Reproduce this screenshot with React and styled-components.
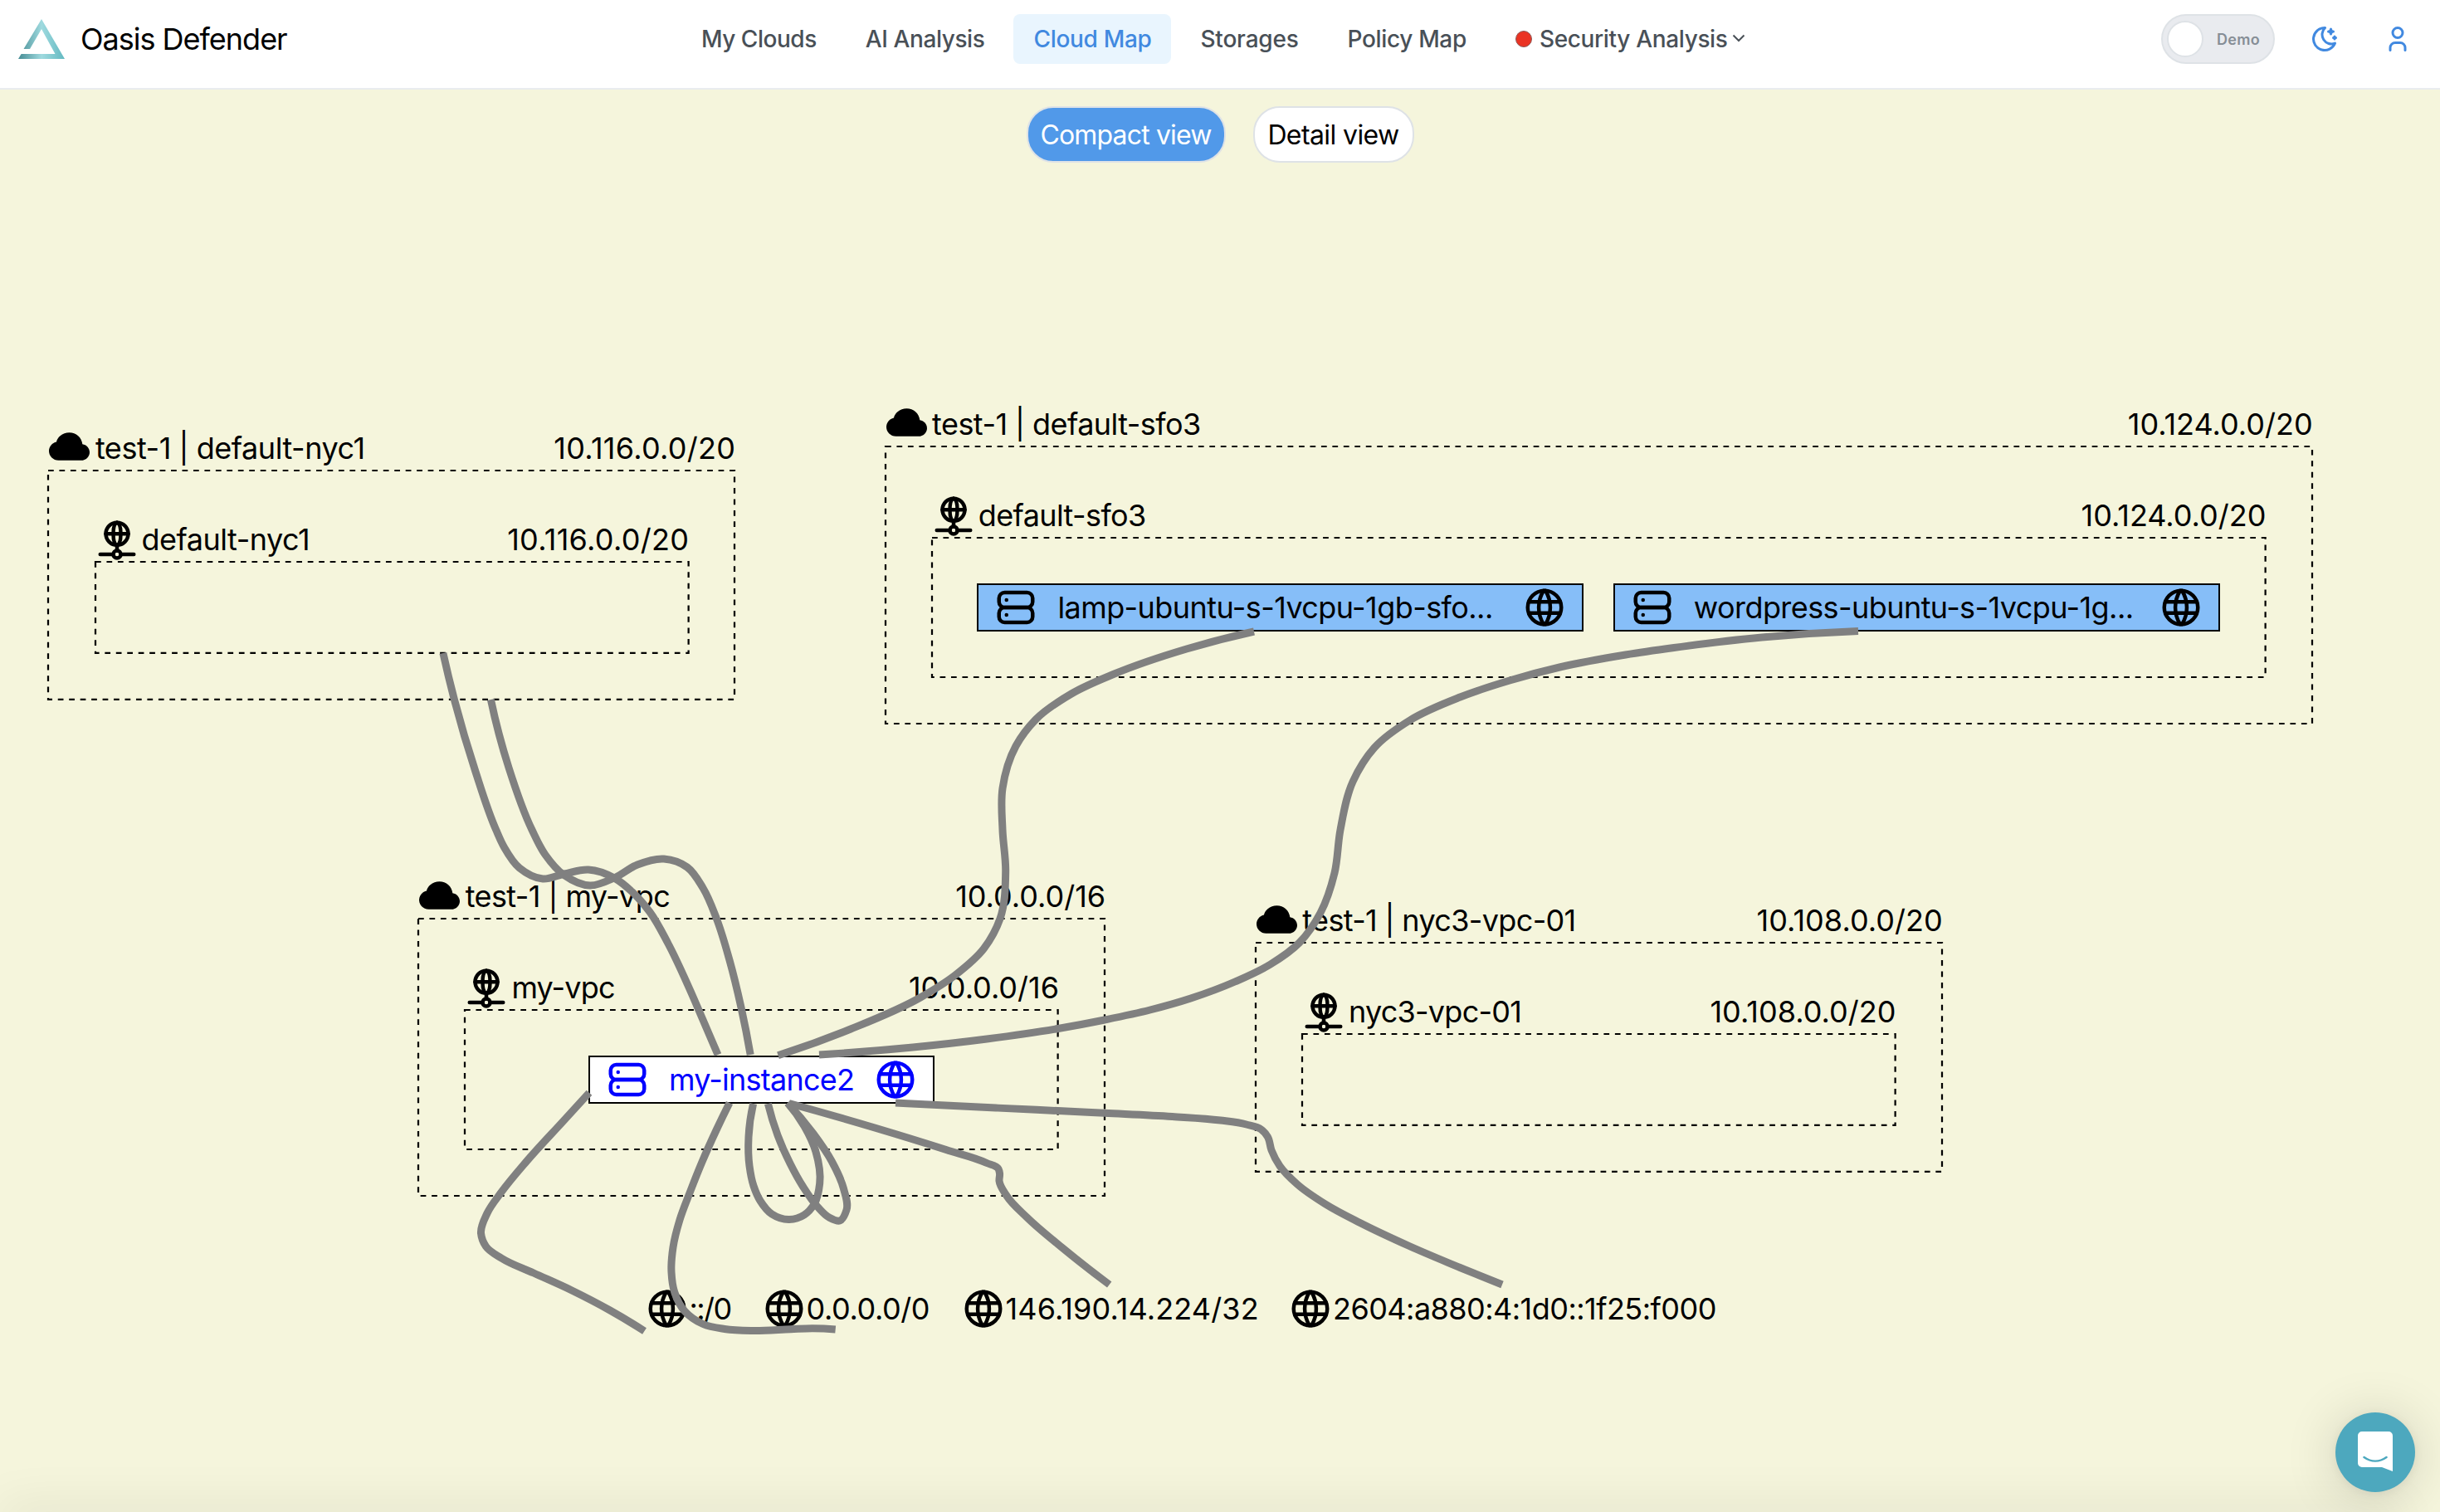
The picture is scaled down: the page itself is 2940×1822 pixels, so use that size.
import styled, { createGlobalStyle } from "styled-components";
import { BsCloudFill } from "react-icons/bs";
import { TbMoonStars, TbNetwork, TbServer, TbUser, TbWorld } from "react-icons/tb";

const GlobalStyle = createGlobalStyle`
  * {
    box-sizing: border-box;
  }

  body {
    margin: 0;
    font-family: Inter, "Liberation Sans", sans-serif;
    background: #f5f5dc;
    color: #000;
  }
`;

const Page = styled.div`
  width: 100%;
  height: 100vh;
  overflow: hidden;
  display: flex;
  flex-direction: column;
`;

const Header = styled.header`
  height: 108px;
  flex: none;
  padding: 17px 33px 0 22px;
  display: flex;
  align-items: flex-start;
  background: #fff;
  border-bottom: 2px solid #e9ecef;
`;

const Brand = styled.div`
  width: 799px;
  height: 60px;
  display: flex;
  align-items: center;
  gap: 19px;
  font-size: 36px;
  letter-spacing: -1px;
`;

const Nav = styled.nav`
  display: flex;
  gap: 11px;
`;

const NavItem = styled.a`
  height: 60px;
  padding: 0 24px;
  display: flex;
  align-items: center;
  border-radius: 8px;
  font-size: 28px;
  font-weight: 500;
  white-space: nowrap;
  letter-spacing: ${(p) => p.$track || 0}px;
  color: ${(p) => (p.$active ? "#4189e0" : "#495057")};
  background: ${(p) => (p.$active ? "#e9f5fe" : "transparent")};
`;

const AlertDot = styled.span`
  width: 20px;
  height: 20px;
  margin-right: 9px;
  border-radius: 50%;
  border: 1px solid #8d5a58;
  background: #ea3323;
`;

const Chevron = styled.svg`
  width: 16px;
  height: 10px;
  margin-left: 5px;
  margin-top: -2px;
`;

const Tools = styled.div`
  height: 60px;
  margin-left: auto;
  display: flex;
  align-items: center;
  color: #4189e0;
`;

const Toggle = styled.div`
  width: 137px;
  height: 60px;
  padding: 0 16px 0 5px;
  display: flex;
  align-items: center;
  justify-content: space-between;
  border: 2px solid #dee2e6;
  border-radius: 30px;
  background: #e9ebef;
  color: #868e96;
  font-size: 18px;
  font-weight: 600;
  letter-spacing: 0.3px;
`;

const Knob = styled.span`
  width: 44px;
  height: 44px;
  border-radius: 50%;
  border: 2px solid #dee2e6;
  background: #fff;
`;

const IconButton = styled.button`
  width: 36px;
  height: 36px;
  padding: 0;
  margin-left: ${(p) => p.$gap}px;
  border: none;
  background: none;
  color: inherit;
  font-size: 36px;
  line-height: 0;
`;

const ViewSwitch = styled.div`
  height: 88px;
  flex: none;
  padding-top: 20px;
  display: flex;
  justify-content: center;
  gap: 33px;
`;

const ViewButton = styled.button`
  width: ${(p) => p.$width}px;
  height: 68px;
  padding: 0;
  border: 2px solid #dee2e6;
  border-radius: 32px;
  font-family: inherit;
  font-size: 32px;
  letter-spacing: ${(p) => p.$track}px;
  color: ${(p) => (p.$active ? "#fff" : "#000")};
  background: ${(p) => (p.$active ? "#5199e9" : "#fff")};
`;

// free canvas, nodes are placed in page pixels
const Canvas = styled.main`
  position: absolute;
  top: 0;
  left: 0;
  width: 2940px;
  height: 1822px;
  overflow: hidden;
  pointer-events: none;
`;

const Vpc = styled.section`
  position: absolute;
  left: ${(p) => p.$x}px;
  top: ${(p) => p.$y - 54}px;
  width: ${(p) => p.$width}px;
`;

const GroupHead = styled.div`
  height: 54px;
  display: flex;
  align-items: center;
  font-size: 36px;
  line-height: 44px;
  white-space: nowrap;

  svg {
    flex: none;
    margin-left: ${(p) => p.$shift}px;
    margin-right: ${(p) => p.$gap}px;
  }
`;

const Name = styled.span`
  letter-spacing: ${(p) => p.$track || 0}px;
`;

const Cidr = styled.span`
  margin-left: auto;
  margin-right: -1px;
  letter-spacing: ${(p) => p.$track || 0}px;
`;

const GroupBody = styled.div`
  position: relative;
  height: ${(p) => p.$height}px;
  padding: ${(p) => p.$pad};
  display: flex;
  justify-content: center;
  gap: 37.4px;
`;

const Subnet = styled.div`
  flex: 1;
`;

const Dashes = styled.svg`
  position: absolute;
  inset: 0;
  width: 100%;
  height: 100%;
  overflow: visible;
`;

const InstanceBox = styled.div`
  width: ${(p) => p.$width}px;
  height: 56px;
  flex: none;
  padding: 0 19px;
  display: flex;
  align-items: center;
  outline: 2px solid #000;
  outline-offset: -1px;
  font-size: 36px;
  white-space: nowrap;
  color: ${(p) => (p.$selected ? "#0000ff" : "#000")};
  background: ${(p) => (p.$selected ? "#fff" : "#86bef8")};

  svg {
    flex: none;
  }

  svg:last-child {
    margin-left: auto;
  }
`;

const InstanceName = styled.span`
  margin-left: 23px;
  letter-spacing: ${(p) => p.$track || 0}px;
`;

const Address = styled.div`
  position: absolute;
  left: ${(p) => p.$x}px;
  top: 1549px;
  height: 55px;
  display: flex;
  align-items: center;
  font-size: 36px;
  white-space: nowrap;
  letter-spacing: ${(p) => p.$track || 0}px;
`;

const Edges = styled.svg`
  position: absolute;
  inset: 0;
  width: 2940px;
  height: 1822px;
`;

// soft shade along the lower edge of the window
const BottomShade = styled.div`
  position: absolute;
  left: 0;
  right: 50px;
  bottom: -20px;
  height: 20px;
  box-shadow: 0 0 60px rgba(0, 0, 0, 0.14);
`;

const ChatButton = styled.button`
  position: absolute;
  right: 30px;
  bottom: 24px;
  width: 96px;
  height: 96px;
  padding: 0;
  border: none;
  border-radius: 50%;
  background: #4da8be;
  box-shadow: 0 2px 12px rgba(0, 0, 0, 0.06), 0 4px 64px rgba(0, 0, 0, 0.16);
`;

const menu = [
  { label: "My Clouds", track: -0.48 },
  { label: "AI Analysis", track: -0.4 },
  { label: "Cloud Map", track: -0.32, active: true },
  { label: "Storages", track: -0.2 },
  { label: "Policy Map", track: -0.35 },
];

const vpcs = [
  {
    name: "test-1 | default-nyc1",
    subnet: "default-nyc1",
    cidr: "10.116.0.0/20",
    x: 58.4,
    y: 566.5,
    width: 827,
    track: -0.46,
    subnetTrack: -0.5,
    cidrTrack: 0.3,
    instances: [],
  },
  {
    name: "test-1 | default-sfo3",
    subnet: "default-sfo3",
    cidr: "10.124.0.0/20",
    x: 1066.6,
    y: 537.5,
    width: 1719,
    track: -0.55,
    subnetTrack: -0.62,
    instances: [
      { name: "lamp-ubuntu-s-1vcpu-1gb-sfo...", width: 729, track: -0.57 },
      { name: "wordpress-ubuntu-s-1vcpu-1g...", width: 729, track: -0.57 },
    ],
  },
  {
    name: "test-1 | my-vpc",
    subnet: "my-vpc",
    cidr: "10.0.0.0/16",
    x: 504.2,
    y: 1107,
    width: 827,
    track: -0.58,
    subnetTrack: -0.8,
    instances: [{ name: "my-instance2", width: 415.4, selected: true, track: -0.75 }],
  },
  {
    name: "test-1 | nyc3-vpc-01",
    subnet: "nyc3-vpc-01",
    cidr: "10.108.0.0/20",
    x: 1512.8,
    y: 1136,
    width: 827,
    track: -0.65,
    subnetTrack: -0.75,
    cidrTrack: 0.05,
    instances: [],
  },
];

const addresses = [
  { label: "::/0", x: 776.5, track: -1.6 },
  { label: "0.0.0.0/0", x: 917.6, track: -0.4 },
  { label: "146.190.14.224/32", x: 1157.6, track: 0.12 },
  { label: "2604:a880:4:1d0::1f25:f000", x: 1552, track: -0.54 },
];

const edges = [
  [[533.9, 787], [547.4, 843], [573, 930], [597.7, 1000], [607.5, 1021], [626, 1046], [654, 1059], [680, 1053], [709, 1048], [741, 1058.5], [762, 1075], [783, 1099], [805, 1137], [831, 1192], [847, 1229], [865, 1271]],
  [[591.4, 843], [613, 925], [641, 1000], [657, 1030], [679, 1054], [711, 1067], [741, 1057.5], [768, 1042], [800, 1035], [828, 1045], [847, 1070], [863.4, 1107], [879, 1157], [893, 1214], [904.2, 1271]],
  [[1511, 761], [1429.7, 782], [1342.8, 812], [1291, 836], [1248, 867], [1224, 899], [1208, 950], [1208, 1000], [1211.7, 1050], [1205, 1107], [1185.5, 1143], [1151, 1175], [1109, 1202], [1025, 1240], [937.5, 1271.7]],
  [[2239, 760.5], [2123, 768], [2017, 780.5], [1958.7, 789], [1879.3, 804], [1819, 820], [1759.4, 840], [1699.5, 867.5], [1656, 901], [1630, 942], [1615, 1000], [1608, 1052], [1591, 1100], [1565.6, 1136], [1530.8, 1162], [1488, 1183], [1434.8, 1203], [1385.7, 1217], [1331, 1229], [1275, 1239.5], [1189, 1252], [1100, 1262], [987, 1271]],
  [[1079, 1329], [1200, 1335], [1331, 1341.3], [1412.5, 1345.5], [1470.5, 1350], [1501.8, 1355], [1519.6, 1361], [1527.5, 1370], [1532, 1386], [1542, 1405], [1563, 1427], [1597, 1451], [1638.7, 1473.5], [1698, 1501.5], [1758, 1527], [1810, 1548]],
  [[950.7, 1329.5], [1054, 1359], [1140, 1385.5], [1189, 1401.5], [1203, 1408.5], [1204.5, 1414], [1204, 1423], [1213, 1441], [1237.4, 1467], [1280.5, 1504], [1336.7, 1548]],
  [[710, 1316.7], [678, 1351.7], [634, 1400], [604, 1436.7], [587, 1462], [579.5, 1486], [585.5, 1502], [604, 1516], [643, 1534], [689, 1555], [735, 1579], [776.5, 1604]],
  [[879, 1329], [863, 1362], [846, 1400], [831.6, 1436], [819, 1470], [811, 1503], [809, 1533], [812.7, 1557], [825, 1580], [847, 1595.5], [873, 1601.5], [907, 1603.5], [953, 1601.7], [979, 1600.7], [1006.7, 1602]],
  [[907.6, 1330], [902, 1370], [903, 1405], [908, 1429], [916, 1447], [930, 1463], [951, 1469.5], [969, 1464], [981, 1451], [987.7, 1426], [983, 1388], [969, 1357], [949, 1329]],
  [[925.4, 1330], [937, 1368], [952, 1402], [967.6, 1430], [984.9, 1454], [999, 1467], [1011.8, 1471], [1020, 1458], [1016.4, 1432], [1002, 1399], [980, 1366], [949, 1329]],
];

// smooth curve through the routed points, tangents weighted by chord length
const toPath = (pts) => {
  const dist = (p, q) => Math.hypot(q[0] - p[0], q[1] - p[1]);
  const tangents = pts.map((p, i) => {
    const prev = pts[i - 1];
    const next = pts[i + 1];
    if (!prev || !next) return null;
    const h1 = dist(prev, p);
    const h2 = dist(p, next);
    return [0, 1].map(
      (n) => (((p[n] - prev[n]) / h1) * h2 + ((next[n] - p[n]) / h2) * h1) / (h1 + h2)
    );
  });
  let d = `M${pts[0].join(" ")}`;
  for (let i = 1; i < pts.length; i++) {
    const a = pts[i - 1];
    const b = pts[i];
    const h = dist(a, b);
    const chord = [0, 1].map((n) => (b[n] - a[n]) / h);
    // open ends mirror the tangent of their inner neighbour
    const mirror = (m) => [0, 1].map((n) => 2 * chord[n] - m[n]);
    const m1 = tangents[i - 1] || mirror(tangents[i]);
    const m2 = tangents[i] || mirror(m1);
    const c1 = [0, 1].map((n) => a[n] + (m1[n] * h) / 3);
    const c2 = [0, 1].map((n) => b[n] - (m2[n] * h) / 3);
    d += ` C${c1.join(" ")} ${c2.join(" ")} ${b.join(" ")}`;
  }
  return d;
};

const Logo = () => (
  <svg width="56" height="48" viewBox="0 0 56 48">
    <defs>
      <linearGradient id="brand" x1="0" x2="1" y1="0" y2="0">
        <stop offset="0" stopColor="#468c94" />
        <stop offset="0.5" stopColor="#9fdadf" />
        <stop offset="1" stopColor="#63b9c1" />
      </linearGradient>
    </defs>
    <path d="M28 0 56 48H0L3.6 42H44.5L28 12 14 36H6.5Z" fill="url(#brand)" />
  </svg>
);

const DashedRect = () => (
  <Dashes>
    <rect
      width="100%"
      height="100%"
      fill="none"
      stroke="#000"
      strokeWidth="2.24"
      strokeDasharray="6.73"
    />
  </Dashes>
);

const Instance = ({ name, width, selected, track }) => (
  <InstanceBox $width={width} $selected={selected}>
    <TbServer size={54} />
    <InstanceName $track={track}>{name}</InstanceName>
    <TbWorld size={54} />
  </InstanceBox>
);

const VpcNode = ({ vpc }) => {
  const inner = vpc.instances.length ? 168 : 109.8;
  return (
    <Vpc $x={vpc.x} $y={vpc.y} $width={vpc.width}>
      <GroupHead $shift={1} $gap={6.5}>
        <BsCloudFill size={49} />
        <Name $track={vpc.track}>{vpc.name}</Name>
        <Cidr $track={vpc.cidrTrack}>{vpc.cidr}</Cidr>
      </GroupHead>
      <GroupBody $height={inner + 166} $pad="56px 56.2px">
        <DashedRect />
        <Subnet>
          <GroupHead $shift={-1} $gap={3}>
            <TbNetwork size={54} />
            <Name $track={vpc.subnetTrack}>{vpc.subnet}</Name>
            <Cidr $track={vpc.cidrTrack}>{vpc.cidr}</Cidr>
          </GroupHead>
          <GroupBody $height={inner} $pad={vpc.instances.length ? "56px 0" : "0"}>
            <DashedRect />
            {vpc.instances.map((item) => (
              <Instance key={item.name} {...item} />
            ))}
          </GroupBody>
        </Subnet>
      </GroupBody>
    </Vpc>
  );
};

const App = () => {
  return (
    <Page>
      <GlobalStyle />
      <Header>
        <Brand>
          <Logo />
          Oasis Defender
        </Brand>
        <Nav>
          {menu.map((item) => (
            <NavItem key={item.label} $active={item.active} $track={item.track}>
              {item.label}
            </NavItem>
          ))}
          <NavItem $track={-0.35}>
            <AlertDot />
            Security Analysis
            <Chevron viewBox="0 0 16 10" fill="none" stroke="#495057" strokeWidth="2">
              <path d="M1.5 1.5 8 8l6.5-6.5" />
            </Chevron>
          </NavItem>
        </Nav>
        <Tools>
          <Toggle>
            <Knob />
            Demo
          </Toggle>
          <IconButton $gap={42}>
            <TbMoonStars />
          </IconButton>
          <IconButton $gap={52}>
            <TbUser />
          </IconButton>
        </Tools>
      </Header>
      <ViewSwitch>
        <ViewButton $active $width={240} $track={-0.84}>
          Compact view
        </ViewButton>
        <ViewButton $width={194} $track={-0.6}>
          Detail view
        </ViewButton>
      </ViewSwitch>
      <Canvas>
        {vpcs.map((vpc) => (
          <VpcNode key={vpc.name} vpc={vpc} />
        ))}
        {addresses.map((item) => (
          <Address key={item.label} $x={item.x} $track={item.track}>
            <TbWorld size={54} />
            {item.label}
          </Address>
        ))}
        <Edges>
          {edges.map((pts, i) => (
            <path key={i} d={toPath(pts)} fill="none" stroke="#808080" strokeWidth="9" />
          ))}
        </Edges>
        <BottomShade />
      </Canvas>
      <ChatButton>
        <svg width="42" height="48" viewBox="0 0 42 48">
          <path d="M5 0H37a5 5 0 0 1 5 5V48L29 43H5a5 5 0 0 1-5-5V5a5 5 0 0 1 5-5Z" fill="#fff" />
          <path
            d="M7.5 31c8.5 6 18.5 6 27 0"
            fill="none"
            stroke="#4da8be"
            strokeWidth="2.6"
            strokeLinecap="round"
          />
        </svg>
      </ChatButton>
    </Page>
  );
};

export default App;
